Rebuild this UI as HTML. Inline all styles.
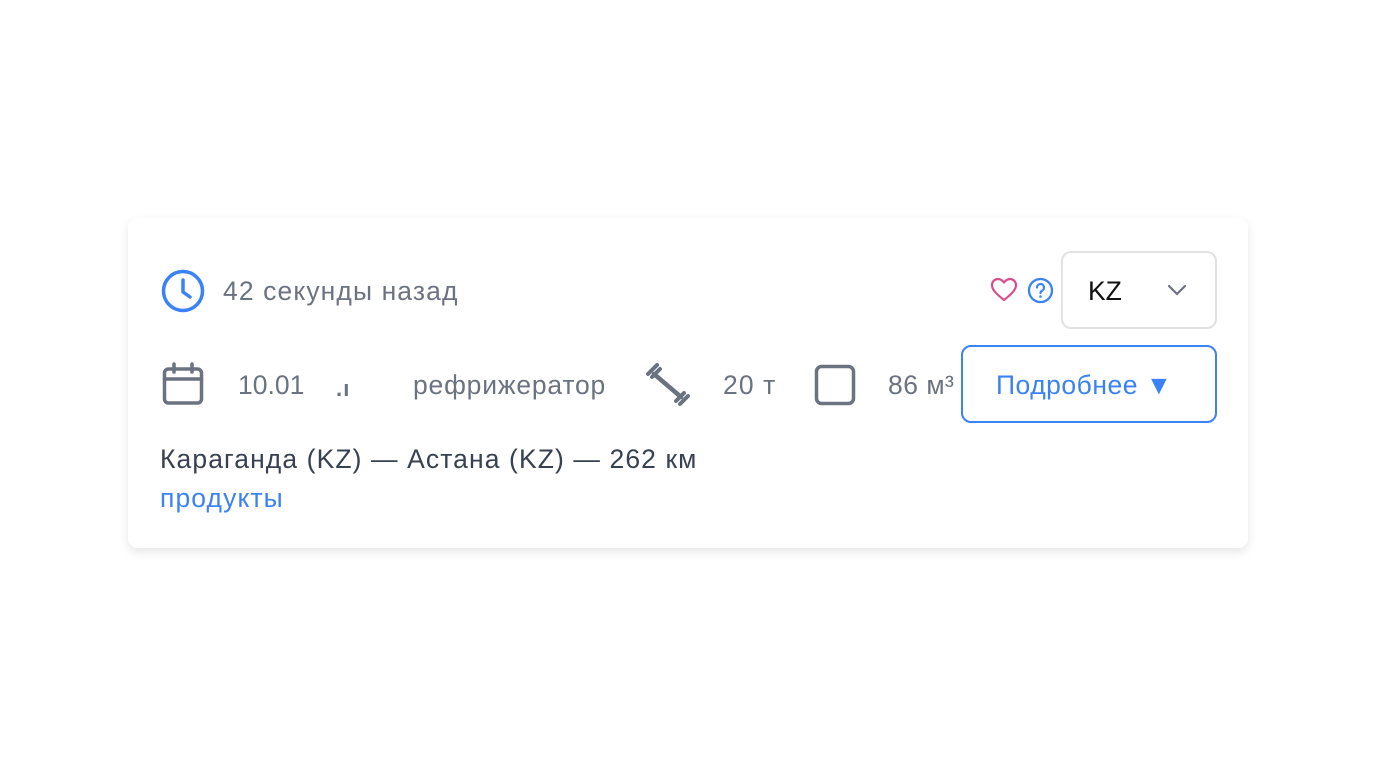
<!DOCTYPE html>
<html><head><meta charset="utf-8"><style>
body{margin:0;width:1376px;height:768px;background:#fff;font-family:"Liberation Sans",sans-serif;position:relative;overflow:hidden}
.card{position:absolute;left:128px;top:218px;width:1120px;height:330px;background:#fff;border-radius:10px;box-shadow:0 4px 10px rgba(0,0,0,0.10)}
.t{position:absolute;white-space:nowrap;color:#6b7280;font-size:26.5px;line-height:30px;letter-spacing:1.1px}
svg{position:absolute}
</style></head><body>
<div class="card"></div>
<svg style="left:160px;top:268px" width="46" height="46" viewBox="0 0 46 46"><circle cx="23" cy="23" r="19.5" fill="none" stroke="#3b82f6" stroke-width="3.5"/><path d="M23 12v12l7 5" fill="none" stroke="#3b82f6" stroke-width="3.5" stroke-linecap="round" stroke-linejoin="round"/></svg>
<div class="t" style="left:223px;top:276px">42 секунды назад</div>
<svg style="left:990px;top:277px" width="28" height="26" viewBox="0 0 28 26"><path d="M14 23 C5 16 2 12 2 8 C2 4.5 4.8 2 8 2 C10.5 2 12.5 3.5 14 5.5 C15.5 3.5 17.5 2 20 2 C23.2 2 26 4.5 26 8 C26 12 23 16 14 23Z" fill="none" stroke="#db4c8a" stroke-width="2.2" stroke-linejoin="round"/></svg>
<svg style="left:1027px;top:277px" width="27" height="27" viewBox="0 0 27 27"><circle cx="13.5" cy="13.5" r="11.5" fill="none" stroke="#3b82f6" stroke-width="2.3"/><path d="M10 10.5a3.5 3.5 0 1 1 5 3.2c-1 .5-1.5 1.2-1.5 2.3" fill="none" stroke="#3b82f6" stroke-width="2.2" stroke-linecap="round"/><circle cx="13.5" cy="19.5" r="1.3" fill="#3b82f6"/></svg>
<div style="position:absolute;left:1061px;top:251px;width:156px;height:78px;border:2px solid #e2e2e2;border-radius:10px;box-sizing:border-box"></div>
<div class="t" style="left:1088px;top:276px;color:#111;letter-spacing:0">KZ</div>
<svg style="left:1166px;top:283px" width="22" height="14" viewBox="0 0 22 14"><path d="M3 3l8 8 8-8" fill="none" stroke="#6b7280" stroke-width="2.2" stroke-linecap="round"/></svg>
<svg style="left:161px;top:362px" width="44" height="44" viewBox="0 0 44 44"><rect x="3.5" y="7" width="37" height="34" rx="4" fill="none" stroke="#6b7280" stroke-width="3.5"/><path d="M3.5 17h37M13 2v8M31 2v8" stroke="#6b7280" stroke-width="3.5" stroke-linecap="round"/></svg>
<div class="t" style="left:238px;top:370px;letter-spacing:0">10.01</div>
<div class="t" style="left:336px;top:374px;font-size:22px;font-weight:bold">.ı</div>
<div class="t" style="left:413px;top:370px;letter-spacing:0.8px">рефрижератор</div>
<svg style="left:644px;top:362px" width="48" height="46" viewBox="0 0 48 46"><path d="M10 12l27 23" stroke="#6b7280" stroke-width="4.5" stroke-linecap="round"/><path d="M4 12l9-9M8 15l8-8M32 39l8-8M36 42l8-8" stroke="#6b7280" stroke-width="4" stroke-linecap="round"/></svg>
<div class="t" style="left:723px;top:370px">20 т</div>
<svg style="left:813px;top:363px" width="44" height="44" viewBox="0 0 44 44"><rect x="3.5" y="3.5" width="37" height="37" rx="5" fill="none" stroke="#6b7280" stroke-width="3.5"/></svg>
<div class="t" style="left:888px;top:370px;letter-spacing:0.5px">86 м³</div>
<div style="position:absolute;left:961px;top:345px;width:256px;height:78px;border:2px solid #3b82f6;border-radius:10px;box-sizing:border-box"></div>
<div class="t" style="left:996px;top:370px;color:#3b82f6;letter-spacing:0.5px">Подробнее ▼</div>
<div class="t" style="left:160px;top:444px;color:#374151">Караганда (KZ) — Астана (KZ) — 262 км</div>
<div class="t" style="left:160px;top:483px;color:#3b82f6">продукты</div>
</body></html>
